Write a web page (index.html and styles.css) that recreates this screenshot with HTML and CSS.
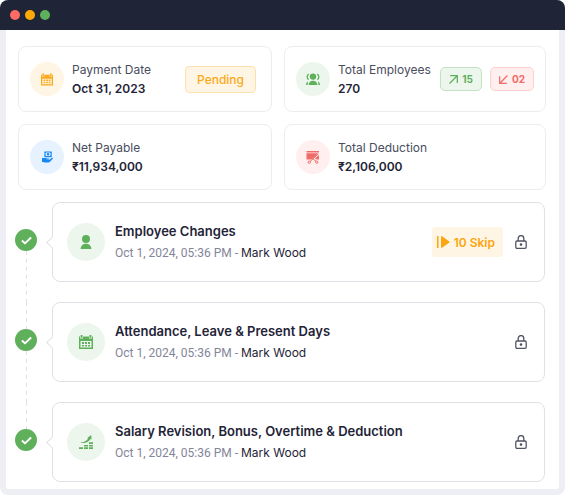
FILE: index.html
```html
<!DOCTYPE html>
<html lang="en">
<head>
    <meta charset="UTF-8">
    <meta name="viewport" content="width=device-width, initial-scale=1.0">
    <title>Payroll</title>
    <link rel="stylesheet" href="styles.css">
</head>
<body>
    <!-- Shared icons -->
    <svg class="sprite" aria-hidden="true">
        <symbol id="calendar" viewBox="0 0 14 14">
            <path fill="currentColor" fill-rule="evenodd" d="M0 1.500h1v2h3v-2h6v2h3v-2h1V14H0zM1.500 6v6.500h11V6z"/>
            <path fill="currentColor" d="M1.600 0h1.900v2.800H1.600zM10.500 0h1.900v2.800h-1.900zM3 7h2v2H3zM6 7h2v2H6zM9 7h2v2H9zM3 10h2v1.500H3zM6 10h2v1.500H6zM9 10h2v1.500H9z"/>
        </symbol>
        <symbol id="check" viewBox="0 0 10 8">
            <path fill="none" stroke="currentColor" stroke-width="1.8" stroke-linejoin="round" d="M.8 4.100l2.800 2.500L9.200 1.200"/>
        </symbol>
        <symbol id="lock" viewBox="0 0 12 14">
            <path fill="none" stroke="currentColor" stroke-width="1.3" d="M3.200 6V3.400a2.800 2.800 0 0 1 5.600 0V6"/>
            <rect x=".8" y="6" width="10.400" height="7.300" rx="1.200" fill="none" stroke="currentColor" stroke-width="1.3"/>
            <circle cx="6" cy="9.600" r="1.300" fill="currentColor"/>
        </symbol>
    </svg>

    <div class="window">
        <header class="titlebar">
            <span class="dot dot-red"></span>
            <span class="dot dot-orange"></span>
            <span class="dot dot-green"></span>
        </header>

        <main class="content">
            <section class="summary">
                <div class="card">
                    <span class="icon orange"><svg width="12" height="13"><use href="#calendar"/></svg></span>
                    <div class="card-text">
                        <p class="label">Payment Date</p>
                        <p class="value">Oct 31, 2023</p>
                    </div>
                    <span class="badge orange">Pending</span>
                </div>

                <div class="card">
                    <span class="icon green">
                        <svg width="14" height="12" viewBox="0 0 14 12">
                            <circle cx="7" cy="3.6" r="3.2" fill="currentColor"/>
                            <path fill="currentColor" d="M2.6 12c.2-2.6 1.7-4.2 4.4-4.2s4.2 1.6 4.4 4.2zM0 12c0-1.7.6-2.9 2-3.6L1.6 12zM14 12c0-1.7-.6-2.9-2-3.6l.4 3.6z"/>
                            <path fill="none" stroke="currentColor" stroke-width="1.3" d="M2.8 1.2C.7 2.2.7 5.4 2.6 6.8M11.2 1.2c2.1 1 2.1 4.2.2 5.6"/>
                        </svg>
                    </span>
                    <div class="card-text">
                        <p class="label">Total Employees</p>
                        <p class="value">270</p>
                    </div>
                    <div class="counts">
                        <span class="count green">
                            <svg width="9" height="9" viewBox="0 0 8 8"><path fill="none" stroke="currentColor" stroke-width="1.1" d="M.5 7.5l7-7M1 .6h6.4V7"/></svg>
                            15
                        </span>
                        <span class="count red">
                            <svg width="9" height="9" viewBox="0 0 8 8"><path fill="none" stroke="currentColor" stroke-width="1.1" d="M7.5.5l-7 7M.6 1v6.4H7"/></svg>
                            02
                        </span>
                    </div>
                </div>

                <div class="card">
                    <span class="icon blue">
                        <svg width="11" height="12" viewBox="0 0 12 12">
                            <path fill="currentColor" fill-rule="evenodd" d="M2.600 0h8v6.400h-8zm2 1.200a1 1 0 0 1-.8.8v2a1 1 0 0 1 .8.9h4a1 1 0 0 1 .8-.9V2a1 1 0 0 1-.8-.8z"/>
                            <circle cx="6.600" cy="3" r="1.300" fill="currentColor"/>
                            <path fill="currentColor" d="M0 7.200h3.600c1 0 1.600.4 2.400.4h1.200c.8 0 .8 1 0 1H5v.4h3l2.600-2c.9-.6 1.800.2 1.200.9l-3.100 3.300c-.6.6-1 .8-1.800.8H2.600L1.400 11.500H0z"/>
                        </svg>
                    </span>
                    <div class="card-text">
                        <p class="label">Net Payable</p>
                        <p class="value">₹11,934,000</p>
                    </div>
                </div>

                <div class="card">
                    <span class="icon red">
                        <svg width="14" height="14" viewBox="0 0 14 14">
                            <path fill="currentColor" d="M.5 1h12.500v1.400H.5zM.5 3.200h11.500L8.400 7.200 5.500 9.500H.5zM13 5v4.500h-2.500L8.900 8.300z"/>
                            <path fill="none" stroke="currentColor" d="M12.300 3.800L4 11.600M7 9l3.200 2.600"/>
                            <circle cx="3.200" cy="12.200" r="1.200" fill="none" stroke="currentColor" stroke-width=".9"/>
                            <circle cx="10.800" cy="12.200" r="1.200" fill="none" stroke="currentColor" stroke-width=".9"/>
                        </svg>
                    </span>
                    <div class="card-text">
                        <p class="label">Total Deduction</p>
                        <p class="value">₹2,106,000</p>
                    </div>
                </div>
            </section>

            <ol class="steps">
                <li class="step">
                    <div class="rail"><span class="done"><svg width="11" height="9"><use href="#check"/></svg></span></div>
                    <article class="step-card">
                        <span class="icon icon-lg green">
                            <svg width="12" height="14" viewBox="0 0 12 14">
                                <circle cx="6" cy="4" r="4" fill="currentColor"/>
                                <path fill="currentColor" d="M.6 14c.3-3.100 2-5.200 5.400-5.200s5.100 2.100 5.400 5.200z"/>
                            </svg>
                        </span>
                        <div class="step-text">
                            <h2>Employee Changes</h2>
                            <p><span class="date">Oct 1, 2024, 05:36 PM - </span><span class="author">Mark Wood</span></p>
                        </div>
                        <button class="skip" type="button">
                            <svg width="13" height="12" viewBox="0 0 13 12"><path fill="currentColor" d="M0 0h1.500v12H0zM4 1.200C4 .3 4.600 0 5.400.5l6.600 4.700c.7.5.7 1.100 0 1.600l-6.600 4.700c-.8.5-1.400.2-1.400-.7z"/></svg>
                            10 Skip
                        </button>
                        <button class="lock" type="button" aria-label="Lock"><svg width="12" height="14"><use href="#lock"/></svg></button>
                    </article>
                </li>

                <li class="step">
                    <div class="rail"><span class="done"><svg width="11" height="9"><use href="#check"/></svg></span></div>
                    <article class="step-card">
                        <span class="icon icon-lg green"><svg width="14" height="14"><use href="#calendar"/></svg></span>
                        <div class="step-text">
                            <h2>Attendance, Leave &amp; Present Days</h2>
                            <p><span class="date">Oct 1, 2024, 05:36 PM - </span><span class="author">Mark Wood</span></p>
                        </div>
                        <button class="lock" type="button" aria-label="Lock"><svg width="12" height="14"><use href="#lock"/></svg></button>
                    </article>
                </li>

                <li class="step">
                    <div class="rail"><span class="done"><svg width="11" height="9"><use href="#check"/></svg></span></div>
                    <article class="step-card">
                        <span class="icon icon-lg green">
                            <svg width="14" height="14" viewBox="0 0 14 14">
                                <path fill="currentColor" d="M1.200 7.600c3.500-.2 6-1.800 8-4.200l-1-.4L12.200 0l.4 4.400-1-.3C9.200 7.400 5.500 9 1.200 7.600z"/>
                                <path fill="currentColor" d="M0 12.300h4V14H0zM5 12.300h4V14H5zM10 12.300h4V14h-4zM5 9.900h4v1.600H5zM10 9.900h4v1.600h-4zM10 7.300h4V9h-4z"/>
                            </svg>
                        </span>
                        <div class="step-text">
                            <h2>Salary Revision, Bonus, Overtime &amp; Deduction</h2>
                            <p><span class="date">Oct 1, 2024, 05:36 PM - </span><span class="author">Mark Wood</span></p>
                        </div>
                        <button class="lock" type="button" aria-label="Lock"><svg width="12" height="14"><use href="#lock"/></svg></button>
                    </article>
                </li>
            </ol>
        </main>
    </div>
</body>
</html>
```
FILE: styles.css
```css
* {
    margin: 0;
    padding: 0;
    box-sizing: border-box;
}

body {
    font-family: Inter, 'Liberation Sans', sans-serif;
    font-size: 12px;
    color: #1f2437;
    background-color: #fff;
}

svg {
    display: block;
    flex-shrink: 0;
}

.sprite {
    position: absolute;
    width: 0;
    height: 0;
}

.window {
    min-height: 100vh;
    padding-bottom: 6px;
    border-radius: 8px;
    background-color: #eeeff4;
    overflow: hidden;
}

.titlebar {
    display: flex;
    align-items: center;
    gap: 5px;
    height: 30px;
    padding-left: 10px;
    background-color: #1f2437;
}

.dot {
    width: 10px;
    height: 10px;
    border-radius: 50%;
}

.dot-red {
    background-color: #ff6b66;
}

.dot-orange {
    background-color: #ffa908;
}

.dot-green {
    background-color: #5fb05b;
}

.content {
    margin: 0 6px;
    padding: 16px 13px 7px 12px;
    border-radius: 0 0 2px 2px;
    background-color: #fff;
}

/* Summary cards */
.summary {
    display: grid;
    grid-template-columns: minmax(0, 32fr) minmax(0, 33fr);
    gap: 12px;
}

.card {
    display: flex;
    align-items: center;
    gap: 8px;
    padding: 13px 11px;
    border: 1px solid #ebedf0;
    border-radius: 8px;
    white-space: nowrap;
}

.card-text {
    flex: 1;
    line-height: 19px;
}

.label {
    color: #4a4d5e;
}

.value {
    font-weight: 600;
}

.icon {
    display: flex;
    justify-content: center;
    align-items: center;
    flex-shrink: 0;
    width: 34px;
    height: 34px;
    border-radius: 50%;
}

.icon-lg {
    width: 38px;
    height: 38px;
}

.orange {
    color: #fba919;
    background-color: #fff5e5;
    border-color: #fde0ad;
}

.green {
    color: #5fb05b;
    background-color: #edf6ec;
    border-color: #c4e2c2;
}

.red {
    color: #f06c68;
    background-color: #ffefee;
    border-color: #fbcfcd;
}

.blue {
    color: #1688f5;
    background-color: #e6f2ff;
}

.badge {
    margin-right: 4px;
    padding: 4px 11px;
    border-width: 1px;
    border-style: solid;
    border-radius: 4px;
    font-weight: 500;
    line-height: 17px;
}

.counts {
    display: flex;
    gap: 8px;
}

.count {
    display: flex;
    align-items: center;
    gap: 4px;
    padding: 3px 8px;
    border-width: 1px;
    border-style: solid;
    border-radius: 5px;
    font-size: 10px;
    font-weight: 700;
    line-height: 16px;
}

/* Timeline */
.steps {
    margin-top: 12px;
    margin-right: 1px;
    list-style: none;
}

.step {
    display: flex;
    gap: 15px;
}

.rail {
    display: flex;
    flex-direction: column;
    align-items: center;
    width: 22px;
    margin-left: -3px;
}

.rail::before,
.rail::after {
    content: "";
    width: 1px;
    background: repeating-linear-gradient(#dfe1e6 0 4px, transparent 4px 8px);
}

.rail::before {
    height: 27px;
}

.rail::after {
    flex: 1;
}

.step:first-child .rail::before,
.step:last-child .rail::after {
    background: none;
}

.done {
    display: flex;
    justify-content: center;
    align-items: center;
    width: 22px;
    height: 22px;
    border-radius: 50%;
    color: #fff;
    background-color: #5fb05b;
}

.step-card {
    position: relative;
    display: flex;
    align-items: center;
    flex: 1;
    gap: 10px;
    min-height: 80px;
    margin-bottom: 20px;
    padding: 10px 17px 10px 14px;
    border: 1px solid #dee1e6;
    border-radius: 8px;
}

.step:last-child .step-card {
    margin-bottom: 0;
}

.step-card::before {
    content: "";
    position: absolute;
    top: 35px;
    left: -5px;
    width: 8px;
    height: 8px;
    border-left: 1px solid #dee1e6;
    border-bottom: 1px solid #dee1e6;
    background-color: #fff;
    transform: rotate(45deg);
}

.step-text {
    flex: 1;
    line-height: 22px;
}

.step-text h2 {
    font-size: 13px;
    font-weight: 600;
}

.date {
    font-family: Roboto, 'Liberation Sans', sans-serif;
    color: #83869a;
}

button {
    border: none;
    background: none;
    font-family: inherit;
    cursor: pointer;
}

.skip {
    display: flex;
    align-items: center;
    gap: 4px;
    height: 30px;
    padding: 0 8px 0 5px;
    border-radius: 3px;
    color: #fba510;
    background-color: #fff5e5;
    font-size: 12px;
    font-weight: 600;
}

.lock {
    margin-left: 2px;
    color: #505566;
}
```
